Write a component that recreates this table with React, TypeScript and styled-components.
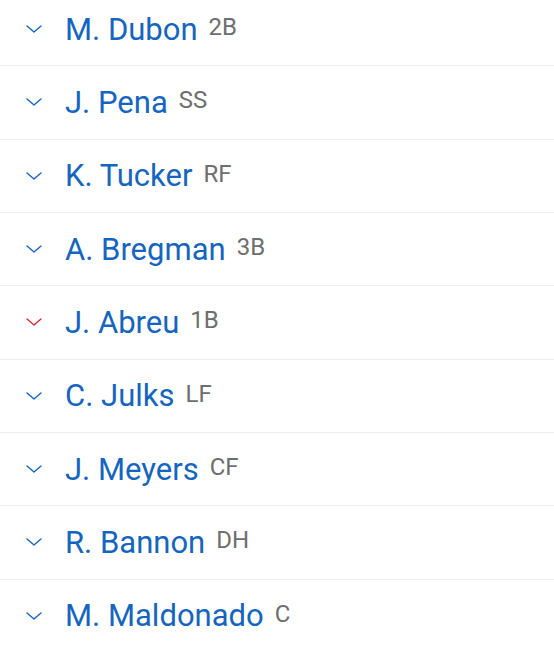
import React from "react";
import styled, { createGlobalStyle } from "styled-components";

const Global = createGlobalStyle`
  html, body { margin: 0; padding: 0; background: #ffffff; }
  body { font-family: Roboto, "Noto Sans", Arial, sans-serif; overflow: hidden; }
`;

const List = styled.ul`
  list-style: none;
  margin: -7px 0 0 0;
  padding: 0;
`;

const Row = styled.li`
  display: flex;
  align-items: center;
  height: 72.33px;
  border-bottom: 1px solid #ededed;
  padding-left: 26px;
  box-sizing: content-box;
`;

const Chevron = styled.svg<{ $alert?: boolean }>`
  width: 16px;
  height: 8px;
  flex: none;
  margin-right: 23px;
  color: ${(p) => (p.$alert ? "#d32f2f" : "#1565c0")};
`;

const Name = styled.span`
  font-size: 31px;
  color: #1565c0;
  line-height: 1;
`;

const Pos = styled.span`
  font-size: 24px;
  color: #6e6e6e;
  margin-left: 11px;
  line-height: 1;
  position: relative;
  top: -2px;
`;

const players: { name: string; pos: string; alert?: boolean }[] = [
  { name: "M. Dubon", pos: "2B" },
  { name: "J. Pena", pos: "SS" },
  { name: "K. Tucker", pos: "RF" },
  { name: "A. Bregman", pos: "3B" },
  { name: "J. Abreu", pos: "1B", alert: true },
  { name: "C. Julks", pos: "LF" },
  { name: "J. Meyers", pos: "CF" },
  { name: "R. Bannon", pos: "DH" },
  { name: "M. Maldonado", pos: "C" },
];

export default function App() {
  return (
    <>
      <Global />
      <List>
        {players.map((p) => (
          <Row key={p.name}>
            <Chevron $alert={p.alert} viewBox="0 0 16 8" fill="none">
              <path d="M1 1 L8 7 L15 1" stroke="currentColor" strokeWidth="1.4" strokeLinecap="round" strokeLinejoin="round" />
            </Chevron>
            <Name>{p.name}</Name>
            <Pos>{p.pos}</Pos>
          </Row>
        ))}
      </List>
    </>
  );
}
